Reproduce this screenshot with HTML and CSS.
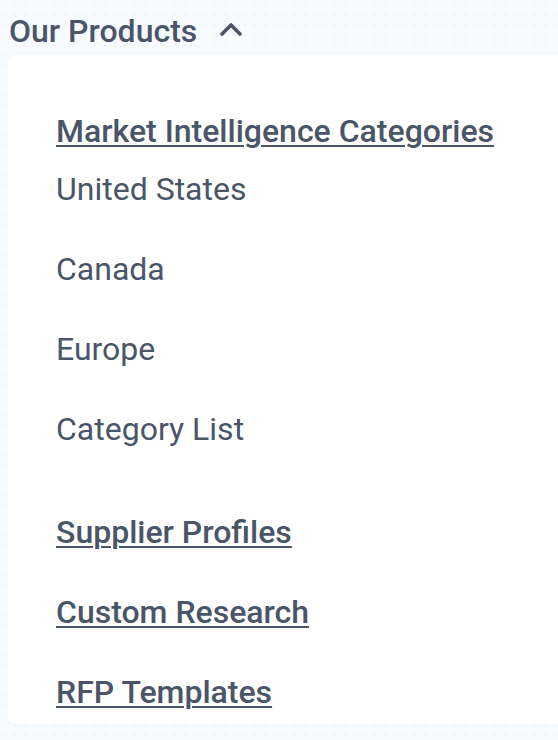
FILE: index.html
```html
<!DOCTYPE html>
<html lang="en">
<head>
<meta charset="utf-8">
<link rel="stylesheet" href="styles.css">
<title>Our Products</title>
</head>
<body>
<div class="menu">
  <button class="toggle">
    <span class="toggle-label">Our Products</span>
    <svg class="chev" width="24" height="16" viewBox="0 0 24 16" aria-hidden="true"><path d="M3 13 L12 4 L21 13" fill="none" stroke="#4a5568" stroke-width="3.6" stroke-linecap="round" stroke-linejoin="round"/></svg>
  </button>
  <div class="panel">
    <div class="group">
      <a class="head" href="#">Market Intelligence Categories</a>
      <ul class="sub">
        <li><a href="#">United States</a></li>
        <li><a href="#">Canada</a></li>
        <li><a href="#">Europe</a></li>
        <li><a href="#">Category List</a></li>
      </ul>
    </div>
    <a class="head single" href="#">Supplier Profiles</a>
    <a class="head single" href="#">Custom Research</a>
    <a class="head single" href="#">RFP Templates</a>
  </div>
</div>
</body>
</html>
```

FILE: styles.css
```css
html, body {
  margin: 0;
  padding: 0;
}
body {
  width: 558px;
  height: 740px;
  overflow: hidden;
  background-color: #f6fbff;
  background-image: radial-gradient(circle, #edf4fa 0.8px, transparent 1.2px);
  background-size: 10px 10px;
  font-family: Roboto, "Liberation Sans", sans-serif;
  color: #4a5568;
}
.menu {
  padding-top: 11px;
}
.toggle {
  display: flex;
  align-items: center;
  gap: 22px;
  background: none;
  border: 0;
  padding: 0 0 0 9px;
  margin: 0;
  font: inherit;
  color: inherit;
  height: 40px;
}
.toggle-label {
  font-size: 32px;
  font-weight: 500;
  line-height: 40px;
}
.chev {
  margin-top: -5px;
}
.panel {
  margin: 4px 0 0 8px;
  background: #ffffff;
  border-radius: 8px 0 0 8px;
  padding: 56px 0 12px 48px;
  display: flex;
  flex-direction: column;
}
.panel a {
  color: #4a5568;
}
.head {
  font-size: 32px;
  font-weight: 500;
  text-decoration: underline;
  text-decoration-thickness: 2px;
  text-underline-offset: 3px;
  line-height: 40px;
  display: block;
  align-self: flex-start;
}
.sub {
  list-style: none;
  margin: 18px 0 0;
  padding: 0;
  display: flex;
  flex-direction: column;
  gap: 40px;
}
.sub a {
  font-size: 32px;
  font-weight: 400;
  text-decoration: none;
  line-height: 40px;
  display: block;
}
.single {
  margin-top: 40px;
}
.group + .single {
  margin-top: 63px;
}
```
